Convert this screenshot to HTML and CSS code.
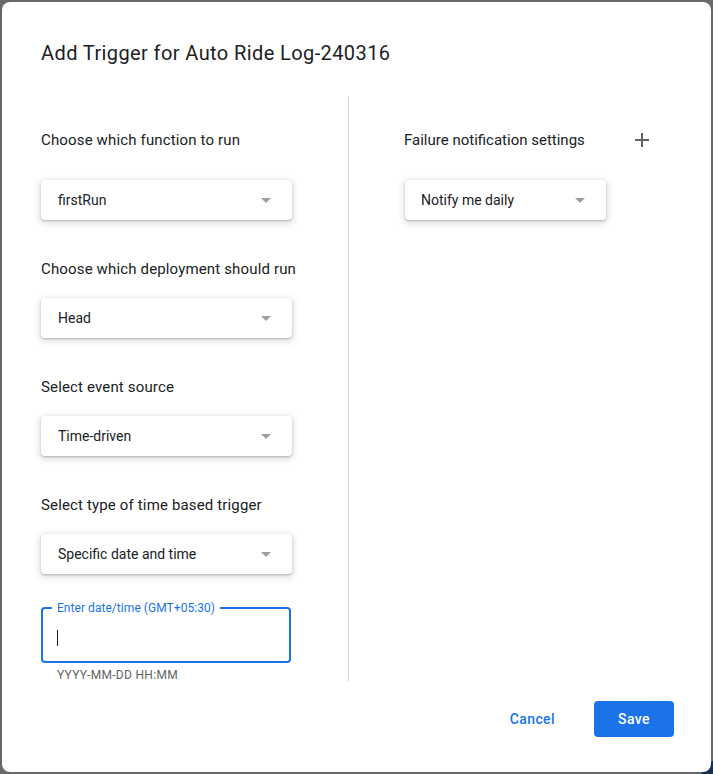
FILE: index.html
```html
<!DOCTYPE html>
<html>
<head>
<meta charset="utf-8">
<link rel="stylesheet" href="styles.css">
</head>
<body>
<div class="dialog">
  <h1 class="title">Add Trigger for Auto Ride Log-240316</h1>
  <div class="content">
    <div class="col col-left">
      <div class="label first">Choose which function to run</div>
      <div class="select"><span>firstRun</span><span class="arrow"></span></div>
      <div class="label">Choose which deployment should run</div>
      <div class="select"><span>Head</span><span class="arrow"></span></div>
      <div class="label">Select event source</div>
      <div class="select"><span>Time-driven</span><span class="arrow"></span></div>
      <div class="label">Select type of time based trigger</div>
      <div class="select"><span>Specific date and time</span><span class="arrow"></span></div>
      <fieldset class="datetime">
        <legend>Enter date/time (GMT+05:30)</legend>
        <span class="cursor"></span>
      </fieldset>
      <div class="hint">YYYY-MM-DD HH:MM</div>
    </div>
    <div class="col col-right">
      <div class="row-head">
        <span class="label-inline">Failure notification settings</span>
        <svg class="plus" width="24" height="24" viewBox="0 0 24 24"><path d="M19 13h-6v6h-2v-6H5v-2h6V5h2v6h6v2z" fill="#5f6368"/></svg>
      </div>
      <div class="select narrow"><span>Notify me daily</span><span class="arrow"></span></div>
    </div>
  </div>
  <div class="actions">
    <button class="btn-text">Cancel</button>
    <button class="btn-primary">Save</button>
  </div>
</div>
</body>
</html>
```

FILE: styles.css
```css
html, body {
  margin: 0;
  height: 100%;
}
body {
  background: linear-gradient(to top left, #17304f 9px, transparent 9px), #686868;
  font-family: Roboto, "Liberation Sans", Arial, sans-serif;
  color: #202124;
  overflow: hidden;
}
.dialog {
  margin: 2px;
  height: 770px;
  background: #fff;
  border-radius: 8px;
  box-sizing: border-box;
}
.title {
  margin: 0;
  padding: 39px 0 0 39px;
  font-size: 20px;
  line-height: 24px;
  font-weight: 400;
  letter-spacing: 0.4px;
  color: #202124;
}
.content {
  display: flex;
  margin-top: 31px;
  height: 585px;
}
.col-left {
  width: 346px;
  box-sizing: border-box;
  padding: 0 0 0 39px;
}
.col-right {
  border-left: 1px solid #d3d3dc;
  padding: 0 0 0 55px;
  flex: 1;
}
.label {
  font-size: 15px;
  line-height: 20px;
  letter-spacing: 0.15px;
  margin-top: 39px;
  margin-bottom: 19px;
}
.label.first {
  margin-top: 34px;
  margin-bottom: 30px;
}
.select {
  width: 251px;
  height: 40px;
  box-sizing: border-box;
  background: #fff;
  border-radius: 4px;
  box-shadow: 0 1px 2px 0 rgba(60,64,67,.3), 0 2px 6px 2px rgba(60,64,67,.15);
  display: flex;
  align-items: center;
  justify-content: space-between;
  padding: 0 21px 0 17px;
  font-size: 14px;
  color: #202124;
}
.select.narrow {
  width: 201px;
  margin-top: 28px;
  margin-left: 1px;
  padding-left: 16px;
}
.arrow {
  width: 0;
  height: 0;
  border-left: 5px solid transparent;
  border-right: 5px solid transparent;
  border-top: 5px solid rgba(0,0,0,.38);
}
.datetime {
  margin: 27px 0 0 0;
  width: 250px;
  height: 62px;
  box-sizing: border-box;
  border: 2px solid #1a73e8;
  border-radius: 4px;
  padding: 0 0 0 9px;
  min-width: 0;
}
.datetime legend {
  font-size: 12px;
  line-height: 14px;
  letter-spacing: 0.05px;
  color: #1a73e8;
  padding: 0 5px;
}
.cursor {
  display: block;
  width: 1px;
  height: 16px;
  background: #202124;
  margin: 15px 0 0 5px;
}
.hint {
  font-size: 12px;
  line-height: 16px;
  letter-spacing: 0.3px;
  color: #5f6368;
  margin: 4px 0 0 16px;
}
.row-head {
  margin-top: 32px;
  width: 250px;
  height: 24px;
  display: flex;
  align-items: center;
  justify-content: space-between;
}
.label-inline {
  font-size: 15px;
  line-height: 20px;
}
.plus {
  display: block;
}
.actions {
  display: flex;
  justify-content: flex-end;
  align-items: center;
  gap: 23px;
  margin-top: 20px;
  padding-right: 37px;
}
.btn-text, .btn-primary {
  font-family: Roboto, "Liberation Sans", Arial, sans-serif;
  font-size: 14px;
  font-weight: 500;
  letter-spacing: 0.4px;
  height: 36px;
  border: none;
  border-radius: 4px;
  cursor: pointer;
}
.btn-text {
  background: transparent;
  color: #1a73e8;
  padding: 0 16px;
}
.btn-primary {
  background: #1a73e8;
  color: #fff;
  width: 80px;
}
```
